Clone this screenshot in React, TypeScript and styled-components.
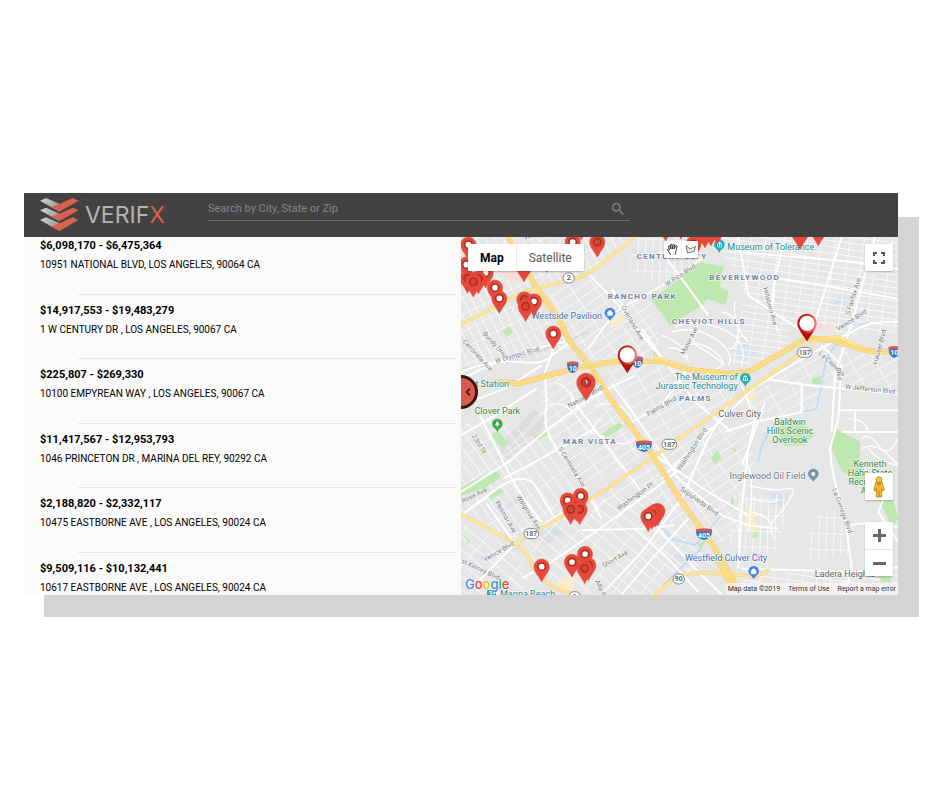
import React from "react";
import styled, { createGlobalStyle } from "styled-components";

const GlobalStyle = createGlobalStyle`
  * { box-sizing: border-box; }
  body { margin: 0; background: #fff; font-family: Roboto, "Liberation Sans", sans-serif; color: #000; }
  button, input { font: inherit; }
`;

const Page = styled.main`
  min-height: 100vh;
  display: grid;
  align-content: center;
  padding: 24px 42px 24px 24px;
`;

const AppWindow = styled.div`
  position: relative;
  z-index: 0;
  display: flex;
  flex-direction: column;
  min-width: 0;
  &::before {
    content: "";
    position: absolute;
    z-index: -1;
    inset: 24px -21px -22px 20px;
    background: #d4d4d4;
  }
`;

const Header = styled.header`
  display: flex;
  align-items: center;
  height: 44px;
  padding: 0 16px;
  background: #424242;
`;

const Brand = styled.a`
  display: flex;
  align-items: center;
  gap: 6px;
  width: 168px;
  color: #b4b4b4;
  font: 400 23px/24px Inter, sans-serif;
  text-decoration: none;
`;

const BrandAccent = styled.span`
  color: #d9614f;
`;

const SearchForm = styled.form`
  display: flex;
  align-items: center;
  align-self: flex-start;
  flex: 0 1 422px;
  height: 24px;
  margin-top: 4px;
  padding-right: 4px;
  border-bottom: 1px solid #6f6f6f;
`;

const SearchInput = styled.input`
  flex: 1;
  min-width: 0;
  padding: 0;
  border: 0;
  outline: 0;
  background: none;
  color: #eee;
  font-size: 11px;
  line-height: 16px;
  &::placeholder { color: #858585; opacity: 1; }
`;

const PlainButton = styled.button`
  display: grid;
  place-items: center;
  padding: 0;
  border: 0;
  background: none;
  cursor: pointer;
`;

const Body = styled.div`
  display: grid;
  grid-template-columns: 1fr 1fr;
  height: 358px;
`;

const ListPanel = styled.section`
  overflow: hidden;
  background: #fafafa;
`;

const Listings = styled.ul`
  display: grid;
  grid-auto-rows: 1fr;
  min-height: 387px;
  margin: -7px 0 0;
  padding: 0 5px 0 16px;
  list-style: none;
`;

const Listing = styled.li`
  position: relative;
  padding-top: 8px;
  &::after {
    content: "";
    position: absolute;
    left: 38px;
    right: 0;
    bottom: 0;
    height: 1px;
    background: #e6e6e6;
  }
`;

const Price = styled.h2`
  margin: 0;
  font-size: 11px;
  line-height: 16px;
  font-weight: 700;
`;

const Address = styled.p`
  margin: 4px 0 0;
  font-size: 10px;
  line-height: 14px;
`;

const MapPanel = styled.section`
  position: relative;
  overflow: hidden;
  background: #e5e5e6;
`;

const MapCanvas = styled.svg`
  display: block;
  width: 100%;
  height: 100%;
`;

const Control = styled.div<{ $top?: number; $bottom?: number; $left?: number; $right?: number }>`
  position: absolute;
  top: ${(p) => (p.$top === undefined ? "auto" : `${p.$top}px`)};
  bottom: ${(p) => (p.$bottom === undefined ? "auto" : `${p.$bottom}px`)};
  left: ${(p) => (p.$left === undefined ? "auto" : `${p.$left}px`)};
  right: ${(p) => (p.$right === undefined ? "auto" : `${p.$right}px`)};
  display: flex;
  background: #fff;
  border-radius: 1px;
  box-shadow: 0 1px 2px rgba(0, 0, 0, 0.25);
`;

const ZoomControl = styled(Control)`
  flex-direction: column;
  button + button { border-top: 1px solid #e6e6e6; }
`;

const TypeButton = styled(PlainButton)<{ $active?: boolean }>`
  height: 27px;
  padding: 0 12px;
  color: ${(p) => (p.$active ? "#000" : "#565656")};
  font-size: 12px;
  font-weight: ${(p) => (p.$active ? 700 : 400)};
  & + & { border-left: 1px solid #e9e9e9; }
`;

const SquareButton = styled(PlainButton)`
  width: 28px;
  height: 27px;
`;

const ToolButton = styled(PlainButton)`
  width: 17px;
  height: 17px;
  & + & { border-left: 1px solid #eee; }
`;

const CollapseButton = styled.button`
  position: absolute;
  top: 138px;
  left: -17px;
  display: grid;
  place-items: center end;
  width: 34px;
  height: 34px;
  padding: 0 4px 0 0;
  border: 3px solid #3b1411;
  border-radius: 50%;
  background: #d85d50;
  cursor: pointer;
`;

const GoogleLink = styled.a`
  position: absolute;
  left: 4px;
  bottom: 2px;
  font: 500 13px/18px Inter, sans-serif;
  text-decoration: none;
  text-shadow: 0 0 1px #fff, 0 0 2px #fff;
`;

const Tint = styled.span<{ $color: string }>`
  color: ${(p) => p.$color};
`;

const Attribution = styled.div`
  position: absolute;
  right: 0;
  bottom: 0;
  display: flex;
  gap: 8px;
  padding: 0 2px;
  background: rgba(245, 245, 245, 0.75);
  color: #333;
  font-size: 7px;
  line-height: 12px;
  a { color: inherit; text-decoration: none; }
`;

const Label = styled.text<{ $size?: number; $halo?: string }>`
  font-family: Roboto, sans-serif;
  font-size: ${(p) => p.$size ?? 27}px;
  paint-order: stroke;
  stroke: ${(p) => p.$halo ?? "rgba(255,255,255,.75)"};
  stroke-width: 4px;
  stroke-linejoin: round;
`;

const District = styled(Label)`
  font-weight: 700;
  font-size: 24px;
  letter-spacing: 4px;
  fill: #7080a3;
`;

const listings = [
  ["$6,098,170 - $6,475,364", "10951 NATIONAL BLVD, LOS ANGELES, 90064 CA"],
  ["$14,917,553 - $19,483,279", "1 W CENTURY DR , LOS ANGELES, 90067 CA"],
  ["$225,807 - $269,330", "10100 EMPYREAN WAY , LOS ANGELES, 90067 CA"],
  ["$11,417,567 - $12,953,793", "1046 PRINCETON DR , MARINA DEL REY, 90292 CA"],
  ["$2,188,820 - $2,332,117", "10475 EASTBORNE AVE , LOS ANGELES, 90024 CA"],
  ["$9,509,116 - $10,132,441", "10617 EASTBORNE AVE , LOS ANGELES, 90024 CA"],
];

// id, rotation, block width, block height
const grids: [string, number, number, number][] = [
  ["west", -27, 24, 46],
  ["centre", -35, 62, 27],
  ["mar", -36, 28, 70],
  ["south", -50, 30, 66],
  ["east", 8, 42, 19],
  ["palms", -30, 64, 30],
  ["upright", 2, 22, 48],
];

const tracts: [string, string][] = [
  ["west", "M18 15H540L400 130L230 175L120 225L18 270Z"],
  ["west", "M18 285L225 185L350 345L220 385L18 420Z"],
  ["centre", "M260 185L420 130L500 210L590 200L620 380L410 385L350 320Z"],
  ["upright", "M545 20L720 15L740 85L620 160L520 110Z"],
  ["east", "M740 15H1329V300L1130 310L1056 305L930 230L870 190L830 100Z"],
  ["east", "M870 200L1000 270L1000 350L880 400L820 400Z"],
  ["palms", "M450 400L620 395L740 425L860 470L600 655L560 600Z"],
  ["palms", "M1070 350L1329 375V480L1090 470L940 450Z"],
  ["palms", "M930 460L1100 480L1090 535L900 570L830 530Z"],
  ["centre", "M270 420L400 410L550 620L580 660L400 770L310 640L250 560Z"],
  ["mar", "M18 580L130 560L310 650L390 770L180 920L18 840Z"],
  ["centre", "M390 790L590 690L690 830L760 930L640 870L560 760L420 850Z"],
  ["south", "M200 930L400 810L580 780L780 1000L640 1040L600 1087H320L250 1020Z"],
  ["centre", "M600 670L740 580L880 600L900 700L860 800L860 930L790 930Z"],
  ["upright", "M850 800L1000 780L980 900L940 1010L820 930Z"],
  ["upright", "M1080 850L1170 830L1190 960L1050 990Z"],
  ["east", "M860 1030L1329 1010V1087H870Z"],
  ["south", "M18 870L170 950L230 1040L200 1087H18Z"],
];

const streets = [
  "M18 440L150 380L260 345L330 330", "M18 420Q110 380 190 390T290 370L345 330",
  "M18 520L150 470L260 400", "M295 350L270 420L275 520Q260 590 300 640L390 770L440 860",
  "M18 610L120 550L245 470", "M75 550L170 740L200 790L260 870", "M18 780L160 690L280 590L420 490L540 430",
  "M18 850L140 760Q210 720 240 760L300 860", "M145 740L240 690L420 590", "M95 815L180 935",
  "M60 1060L180 935L340 830", "M200 1040L290 990L420 900L600 770L700 690", "M380 895L560 890L660 880",
  "M440 1087L560 960L680 800L760 620L830 500", "M500 1087L600 970L700 860", "M600 880L740 1030L800 1087",
  "M540 890L640 980L730 1080", "M660 730L800 850L880 880L970 890", "M860 460L900 560L880 650L860 700",
  "M560 290L620 375L720 510L830 600", "M470 170L560 310L640 400", "M400 125L500 230L620 380", "M620 60L680 140L760 250",
  "M740 80L640 150L480 240L400 350", "M850 15L880 190L1060 310", "M990 15L960 140L950 250L970 300",
  "M1160 15L1080 270L1050 330", "M1260 15L1200 240L1140 430L1130 600", "M1329 110L1200 90L850 60", "M1329 200L1100 160L900 130",
  "M1329 270Q1240 265 1190 300L1060 370L900 465L740 620L620 740", "M1100 340L1160 400L1150 560L1125 650Q1130 740 1170 850L1190 1010L1170 1087",
  "M930 440L1060 460L1329 485", "M1040 450L1040 540L900 570L810 600", "M1150 535H1329", "M1329 600H1160", "M1200 540V600",
  "M1185 880Q1240 865 1329 885", "M860 1010L1040 1015L1200 1020L1329 1005", "M1310 740L1270 840L1329 930", "M930 510L880 650L860 830L850 1010",
  "M600 670L760 780L880 850", "M470 455L660 720", "M350 500L560 780", "M700 410L620 520L530 570",
];

const lanes = [
  "M660 285Q720 260 800 290T860 400", "M650 300Q720 280 780 320T820 400", "M620 310Q690 330 700 390", "M680 345Q730 320 780 360T770 415",
  "M840 210Q830 280 880 330", "M800 240Q850 250 850 300T820 350", "M730 280Q690 320 740 350T810 400", "M640 350Q680 340 690 380",
  "M1220 620Q1240 600 1270 640T1329 620", "M1220 650Q1260 630 1300 670T1329 690", "M1180 560Q1230 560 1240 600", "M1240 650Q1270 690 1329 700",
  "M420 520Q500 500 530 560", "M440 560Q390 590 450 620T540 620", "M300 450Q350 470 370 530", "M280 520Q330 500 370 560T430 600",
  "M880 760Q960 780 1000 770T970 850Q930 880 960 920", "M890 800Q960 820 970 800", "M890 840Q940 850 950 880", "M880 700Q900 750 880 900",
];

const highways = [
  "M160 15L205 100L250 175L310 258L345 330L400 395L480 520L590 665L680 810L770 935L825 1025L855 1087",
  "M130 448L190 455L300 425L370 408L480 388L620 388L700 412L820 425L880 420L940 385L1056 318L1130 325L1240 357L1329 360",
  "M790 985L830 1070",
];

const arterials = [
  "M18 277L130 218L220 175L330 148Q400 135 440 95L540 15",
  "M180 934L300 864L450 774L590 680L640 640L750 565L900 460L1000 390L1060 350L1080 325",
  "M18 845L180 934Q225 965 235 1010L290 1065L350 1085",
  "M600 1087L650 1045Q680 1020 760 1022L850 1030L905 1032L940 1015",
  "M600 375L700 410L760 422", "M1060 320L1150 315L1240 355", "M18 480L130 448",
];

const parks = [
  "M590 205L735 90L805 105L795 165L822 180L810 218L755 200L745 218L645 280Z", "M142 297L162 283L175 298L155 315Z",
  "M18 765L120 715L138 735L90 768L18 792Z", "M98 790L135 768L146 780L108 804Z", "M110 610L130 595L158 636L140 648Z",
  "M235 612L275 595L280 607L245 624Z", "M440 605L495 570L504 585L455 615Z", "M1130 605L1145 592L1215 628V680L1230 720L1300 745L1329 860L1310 885L1270 800L1160 715L1130 650Z",
  "M767 680L785 655L800 675L782 695Z", "M1070 440L1098 432L1096 455L1072 458Z", "M960 585L1040 575L1080 605L1050 640L990 642Z",
  "M830 790L840 810L825 830Z", "M730 940L747 923L752 930L737 950Z", "M893 900H908V918H893Z", "M25 908L46 930L40 937Z",
  "M592 358L608 352L614 370L598 380Z", "M832 645L846 655L838 662Z", "M1260 1010L1290 1000L1310 1050H1280Z",
];

const shaded = [
  "M830 350L880 330L910 370L860 390Z", "M1135 205L1170 180L1190 210L1140 220Z", "M150 820L205 780L215 800L160 840Z",
  "M235 900L310 880L330 910L260 940Z", "M640 965L680 950L690 985L650 995Z", "M940 780H1000V820H940Z", "M620 15L700 20L720 80L640 90Z",
];

const roadLabels: [string, number, number, number][] = [
  ["W Pico Blvd", 636, 164, -34], ["Overland Ave", 498, 226, 60], ["Bundy Drive", 82, 305, 48], ["Centinela Ave", 22, 330, 47],
  ["W Olympic Blvd", 122, 394, -16], ["National Blvd", 343, 528, -29], ["Palms Blvd", 580, 553, -30], ["Motor Ave", 688, 370, -63],
  ["Hillsboro Ave", 924, 168, 75], ["S Fairfax Ave", 1184, 250, -73], ["Venice Blvd", 1150, 298, -33], ["Hauser Blvd", 1266, 398, -75],
  ["La Cienega", 1090, 366, 43], ["Blvd", 1143, 408, 82], ["W Jefferson Blvd", 1170, 470, 6], ["23rd St", 50, 613, 57],
  ["S Centinela Ave", 308, 650, 58], ["Washington Blvd", 676, 718, -57], ["Washington Pl", 492, 836, -36], ["Sepulveda Blvd", 674, 774, 35],
  ["Rose Ave", 24, 814, -26], ["Penmar Ave", 120, 812, 60], ["Walgrove Ave", 184, 794, 58], ["Venice Blvd", 90, 990, -30],
  ["st Kinney Blvd", 18, 992, 25], ["Short Ave", 446, 1008, -30], ["Alla Rd", 420, 1048, 65], ["La Cienega Blvd", 1132, 772, 70],
  ["Wa", 210, 24, -20],
];

const districts: [string, number, number][] = [
  ["CENTURY CITY", 545, 82], ["BEVERLYWOOD", 763, 143], ["RANCHO PARK", 458, 201], ["CHEVIOT HILLS", 651, 275], ["PALMS", 672, 506], ["MAR VISTA", 324, 637],
];

type PinSpec = [number, number, boolean, number?];
const pins: PinSpec[] = [
  [40, 38, true], [34, 98, true], [92, 122, true], [38, 138, false], [70, 140, false], [55, 149, false], [120, 167, true], [133, 199, true],
  [207, 104, false], [275, 98, false, 12], [208, 202, false], [237, 208, true], [212, 223, false], [295, 305, true],
  [353, 30, true], [378, 0, false, 12], [427, 30, false], [393, 451, true, 28],
  [632, -18, false], [678, -24, false], [735, -4, false], [750, 2, false], [768, -4, false], [787, -10, false], [715, 36, false],
  [1035, 0, false, 26], [1064, -10, false, 12], [1090, -4, false],
  [338, 805, true], [377, 792, true], [364, 822, false], [374, 832, false], [347, 832, false],
  [607, 837, true], [600, 840, false], [591, 846, true], [580, 853, true],
  [390, 966, true], [351, 990, true], [400, 1000, false], [389, 1009, false], [260, 1004, true],
];

function Pin({ x, y, open, r = 23 }: { x: number; y: number; open: boolean; r?: number }) {
  const d = `M${-r} 0A${r} ${r} 0 0 1 ${r} 0C${r} ${r * 0.7} ${r * 0.5} ${r} 0 ${r * 2}C${-r * 0.5} ${r} ${-r} ${r * 0.7} ${-r} 0Z`;
  const large = r > 26;
  return (
    <g transform={`translate(${x} ${y})`}>
      <path d={d} fill="#e74a3b" stroke="#d53f31" strokeWidth="1" />
      <circle r={r * 0.48} fill={large ? "#c23a30" : open ? "#fff" : "#d64436"} stroke="#a82e25" strokeWidth="5" />
      {large && <path d="M-3 -9L5 -2L3 5Z" fill="#fff" />}
    </g>
  );
}

function SelectedPin({ x, y }: { x: number; y: number }) {
  return (
    <g transform={`translate(${x} ${y})`}>
      <path d="M-29 0A29 29 0 0 1 29 0C29 20 12 30 0 54C-12 30 -29 20 -29 0Z" fill="url(#selected)" />
      <path d="M-21 22Q0 38 21 22L0 54Z" fill="#b60d0d" />
      <circle r="23" fill="#fff" />
    </g>
  );
}

function Interstate({ x, y, n }: { x: number; y: number; n: string }) {
  const w = n.length > 2 ? 24 : 17;
  return (
    <g transform={`translate(${x} ${y})`}>
      <path d={`M${-w} -15Q0 -20 ${w} -15V-4Q${w} 12 0 18Q${-w} 12 ${-w} -4Z`} fill="#3972bd" stroke="#fff" strokeWidth="1" />
      <path d={`M${-w} -15Q0 -20 ${w} -15V-8H${-w}Z`} fill="#d8594f" />
      <text y="10" textAnchor="middle" fontFamily="Roboto, sans-serif" fontSize="21" fontWeight="700" fill="#fff">{n}</text>
    </g>
  );
}

function StateRoute({ x, y, n }: { x: number; y: number; n: string }) {
  const w = n.length > 2 ? 22 : 17;
  return (
    <g transform={`translate(${x} ${y})`}>
      <rect x={-w} y="-15" width={w * 2} height="30" rx="15" fill="#fff" stroke="#858585" strokeWidth="3" />
      <text y="7" textAnchor="middle" fontFamily="Roboto, sans-serif" fontSize="21" fontWeight="500" fill="#555">{n}</text>
    </g>
  );
}

function Place({ x, y, color, kind }: { x: number; y: number; color: string; kind: string }) {
  return (
    <g transform={`translate(${x} ${y})`}>
      <path d="M-16 0A16 16 0 0 1 16 0C16 10 3 14 0 25C-3 14 -16 10 -16 0Z" fill={color} />
      {kind === "museum" && <path d="M-8 -3L0 -9L8 -3ZM-7 -1H-4V5H-7ZM-1 -1H2V5H-1ZM5 -1H8V5H5ZM-8 6H8V8H-8Z" fill="#fff" />}
      {kind === "shop" && <path d="M-7 -3H7V7H-7ZM-4 -3A4 5 0 0 1 4 -3" fill="#fff" stroke="#fff" strokeWidth="2" />}
      {kind === "park" && <path d="M0 -9L7 3H2V8H-2V3H-7Z" fill="#fff" />}
      {kind === "dot" && <circle r="6" fill="#fff" />}
    </g>
  );
}

function MapDrawing() {
  return (
    <MapCanvas viewBox="18 15 1311 1074" preserveAspectRatio="xMidYMid slice" role="img" aria-label="Map of West Los Angeles">
      <defs>
        {grids.map(([id, angle, w, h]) => (
          <pattern key={id} id={id} width={w} height={h} patternUnits="userSpaceOnUse" patternTransform={`rotate(${angle})`}>
            <path d={`M0 0H${w}M0 0V${h}`} stroke="#fafafa" strokeWidth="5" fill="none" />
          </pattern>
        ))}
        <linearGradient id="selected" x1="0" y1="0" x2="1" y2="0.3">
          <stop offset="0" stopColor="#b90d0d" />
          <stop offset="0.5" stopColor="#d12018" />
          <stop offset="1" stopColor="#f0806c" />
        </linearGradient>
      </defs>
      <rect x="0" y="0" width="1400" height="1200" fill="#e6e6e6" />
      {shaded.map((d) => <path key={d} d={d} fill="#dce0e5" />)}
      <path d="M120 690L255 540L235 535L150 620ZM150 690L260 590L280 540L130 680Z" fill="#dcdddd" />
      <path d="M18 410L160 390L330 330L400 300" stroke="#d6d8d9" strokeWidth="7" fill="none" />
      {tracts.map(([id, d]) => <path key={d} d={d} fill={`url(#${id})`} />)}
      <path d="M130 115L190 105L225 135L170 155ZM1080 285L1125 275L1145 290L1090 302Z" fill="#f6dedd" />
      <path d="M465 270L500 250L506 270L470 288ZM870 840L885 825L908 890L880 895ZM300 1050L350 1030L360 1070L310 1078ZM870 490L900 475L905 500L875 510Z" fill="#fbecc8" />
      {parks.map((d) => <path key={d} d={d} fill="#bfe8b1" />)}
      <g fill="none" stroke="#b9dcf5" strokeWidth="5">
        <path d="M1240 270Q1130 320 1110 400L1085 530L970 555L920 640L910 690" />
        <path d="M600 1087L700 985L740 950" />
        <path d="M600 860L650 920L720 940L800 850" />
      </g>
      <g fill="none" stroke="#fff" strokeLinejoin="round">
        {lanes.map((d) => <path key={d} d={d} strokeWidth="4" />)}
        {streets.map((d) => <path key={d} d={d} strokeWidth="6" />)}
      </g>
      <g fill="none" strokeLinejoin="round" strokeLinecap="round">
        {arterials.map((d) => <path key={d} d={d} stroke="#f3d27b" strokeWidth="10" />)}
        {highways.map((d) => <path key={d} d={d} stroke="#f0cb6a" strokeWidth="16" />)}
        {arterials.map((d) => <path key={d} d={d} stroke="#fde69c" strokeWidth="7" />)}
        {highways.map((d) => <path key={d} d={d} stroke="#fddf8c" strokeWidth="12" />)}
        {highways.map((d) => <path key={d} d={d} stroke="#f5cf70" strokeWidth="2" />)}
      </g>
      {roadLabels.map(([t, x, y, a]) => (
        <Label key={`${t}${x}`} $size={20} fill="#74797f" transform={`translate(${x} ${y}) rotate(${a})`}>{t}</Label>
      ))}
      {districts.map(([t, x, y]) => <District key={t} x={x} y={y}>{t}</District>)}
      <g fill="#228a94">
        <Label x="817" y="53">Museum of Tolerance</Label>
        <Label x="848" y="443" textAnchor="end">The Museum of</Label>
        <Label x="848" y="470" textAnchor="end">Jurassic Technology</Label>
        <Label x="162" y="465" textAnchor="end">t Station</Label>
        <Label x="135" y="1094">Marina Beach</Label>
      </g>
      <g fill="#4070bb">
        <Label x="441" y="260" textAnchor="end">Westside Pavilion</Label>
        <Label x="690" y="988">Westfield Culver City</Label>
      </g>
      <g fill="#35843f" textAnchor="middle">
        <Label x="127" y="547">Clover Park</Label>
        <Label x="1005" y="578">Baldwin</Label>
        <Label x="1005" y="605">Hills Scenic</Label>
        <Label x="1005" y="632">Overlook</Label>
        <Label x="1245" y="706">Kenneth</Label>
        <Label x="1245" y="732">Hahn State</Label>
        <Label x="1245" y="759">Recreation</Label>
        <Label x="1245" y="786">Area</Label>
      </g>
      <g fill="#5f6368">
        <Label x="790" y="554">Culver City</Label>
        <Label x="1079" y="1035">Ladera Heights</Label>
        <Label x="1051" y="741" textAnchor="end" fill="#667c89">Inglewood Oil Field</Label>
      </g>
      <Interstate x={353} y={406} n="10" />
      <Interstate x={547} y={391} n="10" />
      <Interstate x={1318} y={360} n="10" />
      <Interstate x={567} y={643} n="405" />
      <Interstate x={747} y={907} n="405" />
      <StateRoute x={341} y={138} n="2" />
      <StateRoute x={1049} y={361} n="187" />
      <StateRoute x={643} y={637} n="187" />
      <StateRoute x={229} y={905} n="187" />
      <StateRoute x={671} y={1041} n="90" />
      <StateRoute x={359} y={1094} n="1" />
      <Place x={793} y={38} color="#24adb8" kind="museum" />
      <Place x={871} y={439} color="#24adb8" kind="museum" />
      <Place x={465} y={243} color="#3f86ee" kind="shop" />
      <Place x={896} y={1018} color="#3f86ee" kind="shop" />
      <Place x={127} y={576} color="#3daa47" kind="park" />
      <Place x={1075} y={726} color="#7397a8" kind="dot" />
      <path d="M96 1074H123V1092H96Z" fill="#24adb8" />
      <path d="M102 1079H108V1089M112 1079H120V1084H113" fill="none" stroke="#fff" strokeWidth="3" />
      {pins.map(([x, y, open, r]) => <Pin key={`${x}-${y}`} x={x} y={y} open={open} r={r} />)}
      <SelectedPin x={517} y={369} />
      <SelectedPin x={1056} y={274} />
    </MapCanvas>
  );
}

function Logo() {
  return (
    <svg width="39" height="34" viewBox="0 0 117 102" aria-hidden="true">
      <defs>
        <linearGradient id="silver" x1="0" y1="0" x2="1" y2="0.6">
          <stop offset="0" stopColor="#d4d4d4" />
          <stop offset="1" stopColor="#949494" />
        </linearGradient>
      </defs>
      {[0, 29, 58].map((y) => (
        <g key={y} transform={`translate(0 ${y})`}>
          <path d="M0 8L18 0L66 21L58 41Z" fill="url(#silver)" />
          <path d="M33 27L58 18L98 0L116 8L58 41Z" fill="#d9614f" />
        </g>
      ))}
    </svg>
  );
}

export default function App() {
  return (
    <>
      <GlobalStyle />
      <Page>
        <AppWindow>
          <Header>
            <Brand href="#" aria-label="VERIFX home">
              <Logo />
              <span>VERIF<BrandAccent>X</BrandAccent></span>
            </Brand>
            <SearchForm role="search" onSubmit={(e) => e.preventDefault()}>
              <SearchInput type="text" aria-label="Search by City, State or Zip" placeholder="Search by City, State or Zip" />
              <PlainButton type="submit" aria-label="Search">
                <svg width="16" height="16" viewBox="0 0 24 24" fill="#858585" aria-hidden="true">
                  <path d="M15.5 14h-.79l-.28-.27A6.47 6.47 0 0 0 16 9.5 6.5 6.5 0 1 0 9.5 16c1.61 0 3.09-.59 4.23-1.57l.27.28v.79l5 4.99L20.49 19l-4.99-5zm-6 0C7.01 14 5 11.99 5 9.5S7.01 5 9.5 5 14 7.01 14 9.5 11.99 14 9.5 14z" />
                </svg>
              </PlainButton>
            </SearchForm>
          </Header>
          <Body>
            <ListPanel aria-label="Properties">
              <Listings>
                {listings.map(([price, address]) => (
                  <Listing key={address}>
                    <Price>{price}</Price>
                    <Address>{address}</Address>
                  </Listing>
                ))}
              </Listings>
            </ListPanel>
            <MapPanel aria-label="Map">
              <MapDrawing />
              <Control $top={7} $left={7}>
                <TypeButton type="button" $active aria-pressed="true">Map</TypeButton>
                <TypeButton type="button" aria-pressed="false">Satellite</TypeButton>
              </Control>
              <Control $top={4} $left={203}>
                <ToolButton type="button" aria-label="Pan">
                  <svg width="13" height="13" viewBox="0 0 26 26" fill="#fff" stroke="#333" strokeWidth="2" strokeLinecap="round" strokeLinejoin="round" aria-hidden="true">
                    <path d="M9 23C8 19 3 16 3 13c1-2 3 0 4 1L5 7c0-2 3-2 3 0l2 5-1-8c0-2 3-2 3 0l1 8 1-8c0-2 3-2 3 0l-1 8 3-6c1-2 3-1 3 1-2 5-1 11-4 16" />
                  </svg>
                </ToolButton>
                <ToolButton type="button" aria-label="Draw a shape">
                  <svg width="13" height="13" viewBox="0 0 26 26" fill="#ececec" stroke="#777" strokeWidth="2" strokeLinejoin="round" aria-hidden="true">
                    <path d="M4 5L12 12L23 7L20 17L7 20Z" />
                  </svg>
                </ToolButton>
              </Control>
              <Control $top={7} $right={5}>
                <SquareButton type="button" aria-label="Toggle fullscreen">
                  <svg width="14" height="14" viewBox="0 0 14 14" fill="none" stroke="#555" strokeWidth="2" aria-hidden="true">
                    <path d="M2 5V2H5M9 2H12V5M12 9V12H9M5 12H2V9" />
                  </svg>
                </SquareButton>
              </Control>
              <Control $bottom={95} $right={5}>
                <SquareButton type="button" aria-label="Street View">
                  <svg width="12" height="22" viewBox="0 0 36 66" stroke="#a87718" strokeWidth="2" aria-hidden="true">
                    <path d="M8 19H28L34 42L29 45L26 38V63H10V38L7 45L2 42Z" fill="#f6b52b" />
                    <path d="M11 20L18 30L25 20Z" fill="#e7792a" stroke="none" />
                    <circle cx="18" cy="11" r="9" fill="#fbc232" />
                    <path d="M18 42V63" />
                  </svg>
                </SquareButton>
              </Control>
              <ZoomControl $bottom={19} $right={5}>
                <SquareButton type="button" aria-label="Zoom in">
                  <svg width="13" height="13" viewBox="0 0 13 13" stroke="#666" strokeWidth="3" aria-hidden="true"><path d="M0 6.500H13M6.500 0V13" /></svg>
                </SquareButton>
                <SquareButton type="button" aria-label="Zoom out">
                  <svg width="13" height="13" viewBox="0 0 13 13" stroke="#666" strokeWidth="3" aria-hidden="true"><path d="M0 6.500H13" /></svg>
                </SquareButton>
              </ZoomControl>
              <CollapseButton type="button" aria-label="Collapse list">
                <svg width="6" height="8" viewBox="0 0 6 8" fill="none" stroke="#35100d" strokeWidth="1.500" aria-hidden="true"><path d="M5 0.500L1.500 4L5 7.500" /></svg>
              </CollapseButton>
              <GoogleLink href="#" aria-label="Google">
                <Tint $color="#4285f4">G</Tint>
                <Tint $color="#ea4335">o</Tint>
                <Tint $color="#fbbc05">o</Tint>
                <Tint $color="#4285f4">g</Tint>
                <Tint $color="#34a853">l</Tint>
                <Tint $color="#ea4335">e</Tint>
              </GoogleLink>
              <Attribution>
                <span>Map data ©2019</span>
                <a href="#">Terms of Use</a>
                <a href="#">Report a map error</a>
              </Attribution>
            </MapPanel>
          </Body>
        </AppWindow>
      </Page>
    </>
  );
}
